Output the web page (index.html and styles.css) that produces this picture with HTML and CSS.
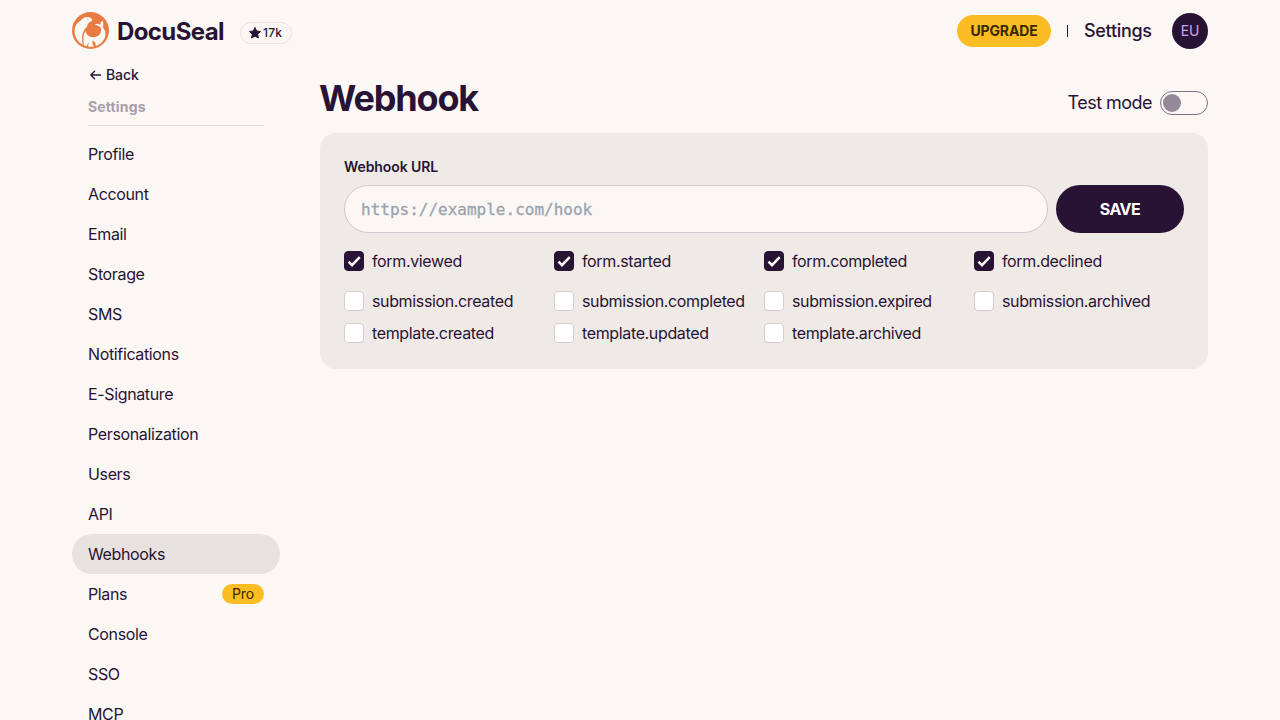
FILE: index.html
```html
<!DOCTYPE html>
<html lang="en">
<head>
<meta charset="utf-8">
<title>DocuSeal</title>
<link rel="stylesheet" href="styles.css">
</head>
<body>
<header class="navbar">
  <div class="brand">
    <svg class="logo" width="37" height="37" viewBox="0 0 37 37">
      <circle cx="18.5" cy="18.5" r="18.5" fill="#e87b42"/>
      <path fill="#faf7f5" d="M19.800 6.700C20.600 7.600 20 9 18.800 9.500C17.200 10 16.300 11 15.800 12.500C15.300 14.700 13.600 15.700 12.300 17.800C9.800 21.800 9.600 27 10.700 32.700C5.600 29.800 2.600 25 2.600 19C2.600 13.500 5.700 10.300 9.300 8C11.300 5.700 13.300 4.700 15.500 5.100C17.200 5.300 18.600 6 19.800 6.700Z"/>
      <path fill="#faf7f5" d="M22.800 12.600C24.700 11.100 27.300 11.600 28.300 13.200C28.100 11.300 28.800 9.600 30.500 8.500C31.500 10.800 31.700 13 30.900 15.200C33.400 18.500 34.200 22 33 25.500C31.300 30 28 32.800 23.700 34C24.100 31.500 22.800 29.700 20.700 28.800C20.100 31 20.700 33.300 22.300 34.600C18.500 35 14.800 34.500 12 33.200C10.900 28 11.200 22.500 13.300 19C14.500 22.800 17.300 25.200 21.300 25.200C26.300 25.100 30 21 28.900 15.900C27.300 13.700 25 13.600 22.800 12.600Z"/>
      <path fill="#e87b42" d="M17.300 30.500C15.700 31.500 14.900 33 14.800 35h1.300C16 33.300 16.400 31.800 17.300 30.500Z"/>
      <circle cx="15.800" cy="7.200" r=".5" fill="#e87b42"/>
    </svg>
    <span class="brand-name">DocuSeal</span>
    <a class="stars">
      <svg width="14" height="14" viewBox="0 0 24 24"><path fill="#291334" stroke="#291334" stroke-width="1.500" stroke-linejoin="round" d="M12 2.500l2.900 6 6.600.9-4.800 4.600 1.200 6.600-5.900-3.200-5.900 3.200 1.200-6.600-4.800-4.600 6.600-.9z"/></svg>
      <span>17k</span>
    </a>
  </div>
  <div class="nav-right">
    <a class="upgrade"><span>UPGRADE</span></a>
    <span class="divider"></span>
    <a class="nav-settings">Settings</a>
    <div class="avatar"><span>EU</span></div>
  </div>
</header>
<div class="layout">
  <aside class="sidebar">
    <a class="back"><svg width="14" height="14" viewBox="0 0 14 14" fill="none" stroke="#291334" stroke-width="1.300" stroke-linecap="round" stroke-linejoin="round"><path d="M12.500 7H2.800M6.600 3.200L2.800 7l3.800 3.800"/></svg><span>Back</span></a>
    <div class="menu-title"><span>Settings</span></div>
    <nav class="menu">
      <a><span>Profile</span></a>
      <a><span>Account</span></a>
      <a><span>Email</span></a>
      <a><span>Storage</span></a>
      <a><span>SMS</span></a>
      <a><span>Notifications</span></a>
      <a><span>E-Signature</span></a>
      <a><span>Personalization</span></a>
      <a><span>Users</span></a>
      <a><span>API</span></a>
      <a class="active"><span>Webhooks</span></a>
      <a><span>Plans</span><span class="badge">Pro</span></a>
      <a><span>Console</span></a>
      <a><span>SSO</span></a>
      <a><span>MCP</span></a>
    </nav>
  </aside>
  <main class="content">
    <div class="heading">
      <h1>Webhook</h1>
      <label class="test-mode"><span>Test mode</span><span class="toggle"></span></label>
    </div>
    <form class="card">
      <label class="field-label" for="url">Webhook URL</label>
      <div class="field-row">
        <input class="url-input" id="url" type="url" placeholder="https://example.com/hook">
        <button class="save" type="button">SAVE</button>
      </div>
      <div class="events">
        <label><input type="checkbox" checked><span>form.viewed</span></label>
        <label><input type="checkbox" checked><span>form.started</span></label>
        <label><input type="checkbox" checked><span>form.completed</span></label>
        <label><input type="checkbox" checked><span>form.declined</span></label>
      </div>
      <div class="events">
        <label><input type="checkbox"><span>submission.created</span></label>
        <label><input type="checkbox"><span>submission.completed</span></label>
        <label><input type="checkbox"><span>submission.expired</span></label>
        <label><input type="checkbox"><span>submission.archived</span></label>
        <label><input type="checkbox"><span>template.created</span></label>
        <label><input type="checkbox"><span>template.updated</span></label>
        <label><input type="checkbox"><span>template.archived</span></label>
      </div>
    </form>
  </main>
</div>
</body>
</html>
```
FILE: styles.css
```css
* { box-sizing: border-box; }
body {
  margin: 0;
  height: 720px;
  overflow: hidden;
  padding: 0 72px;
  background: #faf7f5;
  color: #291334;
  font: 400 16px/24px Inter, sans-serif;
  letter-spacing: -0.36px;
}
.navbar { display: flex; justify-content: space-between; height: 62px; }
.brand { display: flex; align-items: center; height: 61px; }
.logo { display: block; }
.brand-name { margin-left: 8px; font-size: 24px; line-height: 32px; font-weight: 700; letter-spacing: -0.6px; width: 107px; white-space: nowrap; padding-top: 2px; }
.stars {
  display: flex; align-items: center; gap: 1px;
  width: 52px; height: 22px; margin: 5px 0 0 16px; padding-left: 7px;
  border: 1px solid #e7e2df; border-radius: 11px;
  font-size: 12px; font-weight: 500; letter-spacing: 0.2px;
}
.nav-right { display: flex; align-items: center; height: 62px; }
.upgrade {
  display: flex; align-items: center; justify-content: center;
  width: 94px; height: 32px; border-radius: 16px;
  background: #fbbd23; color: #382800;
  font-size: 14px; font-weight: 700; letter-spacing: -0.15px;
}
.divider { width: 1px; height: 12px; margin: 0 16px; background: #291334; }
.nav-settings { width: 68px; font-size: 18px; line-height: 28px; font-weight: 500; letter-spacing: -0.3px; white-space: nowrap; }
.avatar {
  display: flex; align-items: center; justify-content: center;
  width: 36px; height: 36px; margin-left: 20px; border-radius: 50%;
  background: #291334; color: #c9a2f5; font-size: 14px; letter-spacing: -0.1px;
}
.layout { display: flex; gap: 40px; }
.sidebar { width: 208px; flex: none; }
.back { display: flex; align-items: center; gap: 4px; height: 26px; padding-left: 16px; font-size: 14px; font-weight: 500; letter-spacing: -0.1px; }
.menu-title {
  height: 38px; margin: 0 16px 8px; padding-top: 7px;
  border-bottom: 1px solid #e2dddb;
  color: #a99fab; font-size: 14px; font-weight: 700; letter-spacing: 0.15px;
}
.menu { display: flex; flex-direction: column; }
.menu a { display: flex; align-items: center; justify-content: space-between; height: 40px; padding: 0 16px; border-radius: 20px; }
.menu .active { background: #e7e2df; }
.badge { display: flex; align-items: center; justify-content: center; width: 42px; height: 20px; border-radius: 10px; background: #fbbd23; color: #382800; font-size: 14px; letter-spacing: -0.2px; }
.content { flex: 1; }
.heading { display: flex; justify-content: space-between; height: 71px; padding-top: 15px; }
h1 { margin: 0 0 0 -1px; font-size: 36px; line-height: 42px; font-weight: 700; letter-spacing: -1.15px; }
.test-mode { display: flex; align-items: center; gap: 8px; height: 52px; font-size: 18px; letter-spacing: -0.54px; }
.toggle { display: flex; align-items: center; width: 48px; height: 24px; padding-left: 2px; border: 1px solid #7f7185; border-radius: 12px; }
.toggle::before { content: ""; width: 18px; height: 18px; border-radius: 50%; background: #948999; }
.card { height: 236px; padding: 24px; border-radius: 16px; background: #efeae6; }
.field-label { display: block; height: 28px; line-height: 20px; font-size: 14px; font-weight: 600; letter-spacing: -0.08px; }
.field-row { display: flex; gap: 8px; margin-bottom: 16px; }
.url-input { flex: 1; height: 48px; padding: 0 16px; border: 1px solid #cfc9cd; border-radius: 24px; background: #faf7f5; color: #291334; font: 16px "DejaVu Sans Mono", monospace; }
.url-input::placeholder { color: #9ca3af; opacity: 1; -webkit-text-stroke: 0.3px #9ca3af; }
.save { width: 128px; height: 48px; border: 0; border-radius: 24px; background: #291334; color: #fff; font: 700 16px Inter, sans-serif; letter-spacing: -0.5px; }
.events { display: grid; grid-template-columns: repeat(4, 210px); row-gap: 8px; margin-bottom: 16px; }
.events label { display: flex; align-items: center; gap: 8px; height: 24px; white-space: nowrap; }
.events input { appearance: none; flex: none; width: 20px; height: 20px; margin: 0; border: 1px solid #d3cdd1; border-radius: 4px; background: #fff; }
.events input:checked {
  border-color: #291334;
  background: #291334 url("data:image/svg+xml,%3Csvg xmlns='http://www.w3.org/2000/svg' viewBox='0 0 18 18'%3E%3Cpath d='M3.500 9.600l3.500 3.500 7.700-8' fill='none' stroke='white' stroke-width='2.500'/%3E%3C/svg%3E") center / 18px no-repeat;
}
```
